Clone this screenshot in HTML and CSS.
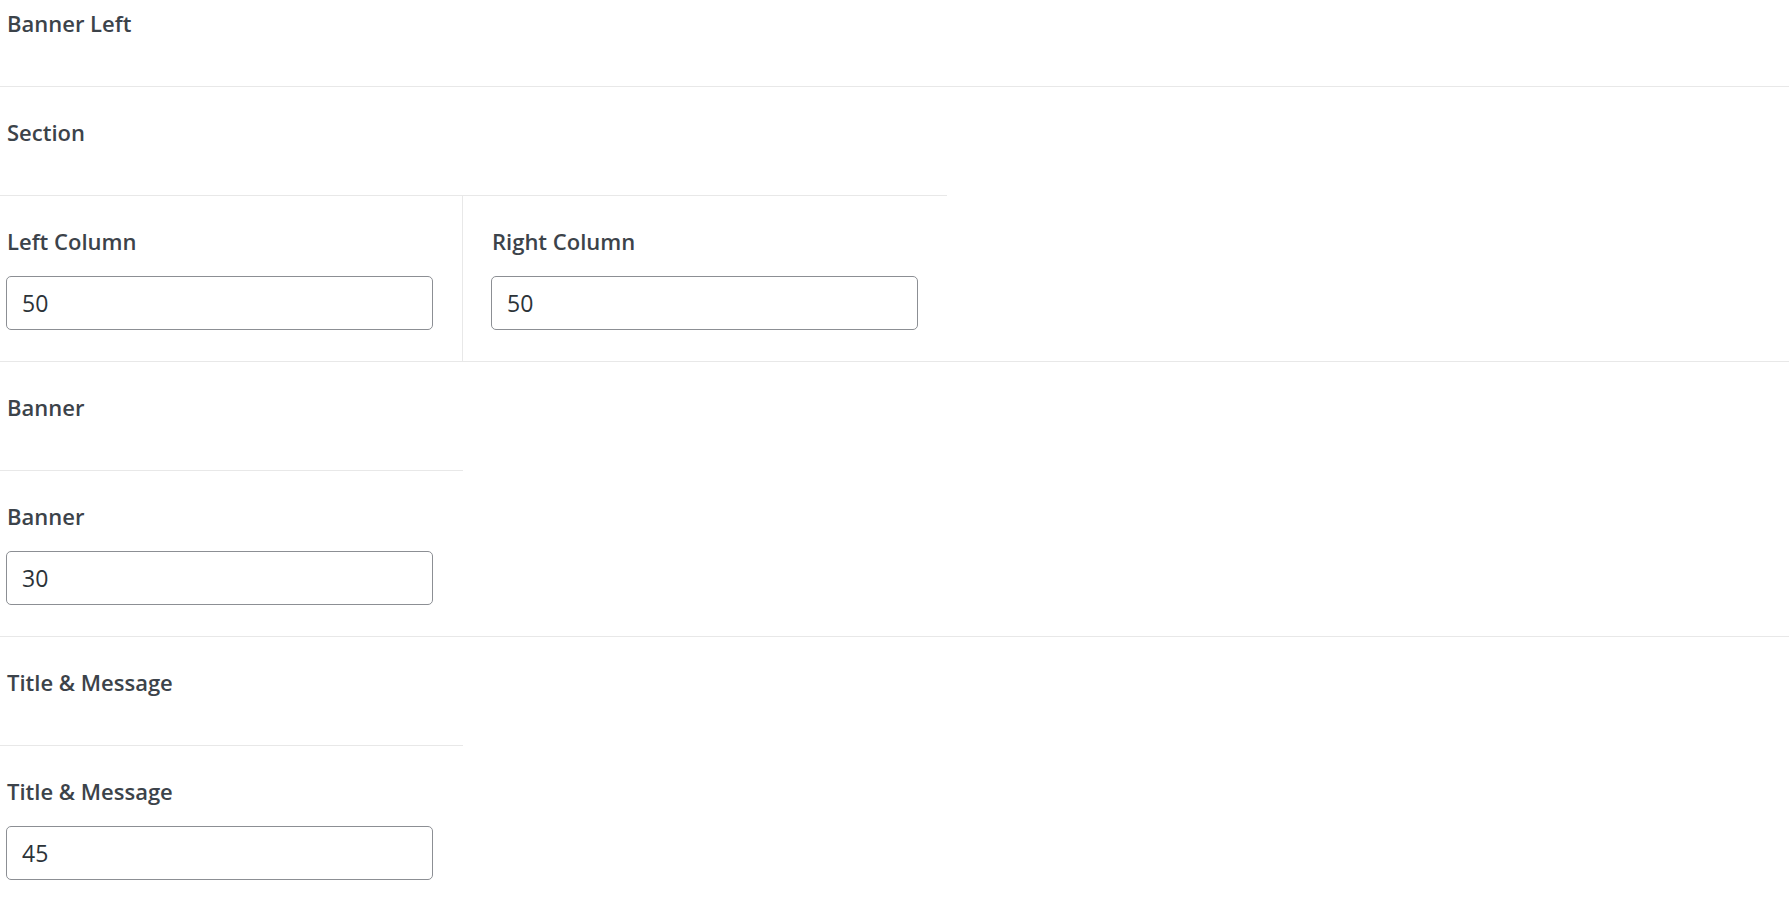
FILE: index.html
```html
<!DOCTYPE html>
<html lang="en">
<head>
    <meta charset="UTF-8">
    <meta name="viewport" content="width=device-width, initial-scale=1.0">
    <title>Layout Settings</title>
    <link rel="stylesheet" href="styles.css">
</head>
<body>
    <div class="panel">
        <div class="group">
            <div class="group-title">Banner Left</div>
        </div>

        <div class="group">
            <div class="group-title wide">Section</div>
            <div class="columns">
                <div class="field field-left">
                    <label for="left_col">Left Column</label>
                    <input type="text" id="left_col" value="50">
                </div>
                <div class="field field-right">
                    <label for="right_col">Right Column</label>
                    <input type="text" id="right_col" value="50">
                </div>
            </div>
        </div>

        <div class="group">
            <div class="group-title narrow">Banner</div>
            <div class="field field-left">
                <label for="banner">Banner</label>
                <input type="text" id="banner" value="30">
            </div>
        </div>

        <div class="group">
            <div class="group-title narrow">Title &amp; Message</div>
            <div class="field field-left">
                <label for="title_msg">Title &amp; Message</label>
                <input type="text" id="title_msg" value="45">
            </div>
        </div>
    </div>
</body>
</html>
```

FILE: styles.css
```css
*{
    margin: 0;
    padding: 0;
    box-sizing: border-box;
}
body{
    background-color: #fff;
    font-family: "Open Sans", "Noto Sans", sans-serif;
    color: #3c434a;
}
.panel{
    margin-top: -22px;
}
.group{
    border-bottom: 1px solid #e8e8e8;
}
.group-title,
.field label{
    display: block;
    font-size: 22px;
    font-weight: 600;
    line-height: 33px;
}
.group-title{
    padding: 29px 7px 46px;
}
.group-title.wide{
    width: 947px;
    border-bottom: 1px solid #e8e8e8;
}
.group-title.narrow{
    width: 463px;
    border-bottom: 1px solid #e8e8e8;
}
/* columns */
.columns{
    display: flex;
    width: 947px;
}
.field{
    width: 463px;
    padding-top: 29px;
    padding-bottom: 31px;
}
.field-left{
    padding-left: 6px;
    padding-right: 30px;
}
.field-left label{
    padding-left: 1px;
}
.columns .field-left{
    border-right: 1px solid #e8e8e8;
}
.field-right{
    width: 484px;
    padding-left: 28px;
    padding-right: 29px;
}
.field-right label{
    padding-left: 1px;
}
.field input{
    display: block;
    width: 427px;
    height: 54px;
    margin-top: 18px;
    padding: 0 15px;
    border: 1px solid #8c8f94;
    border-radius: 5px;
    font-family: "Open Sans", "Noto Sans", sans-serif;
    font-size: 23px;
    color: #2c3338;
    background-color: #fff;
    outline: none;
}
```
